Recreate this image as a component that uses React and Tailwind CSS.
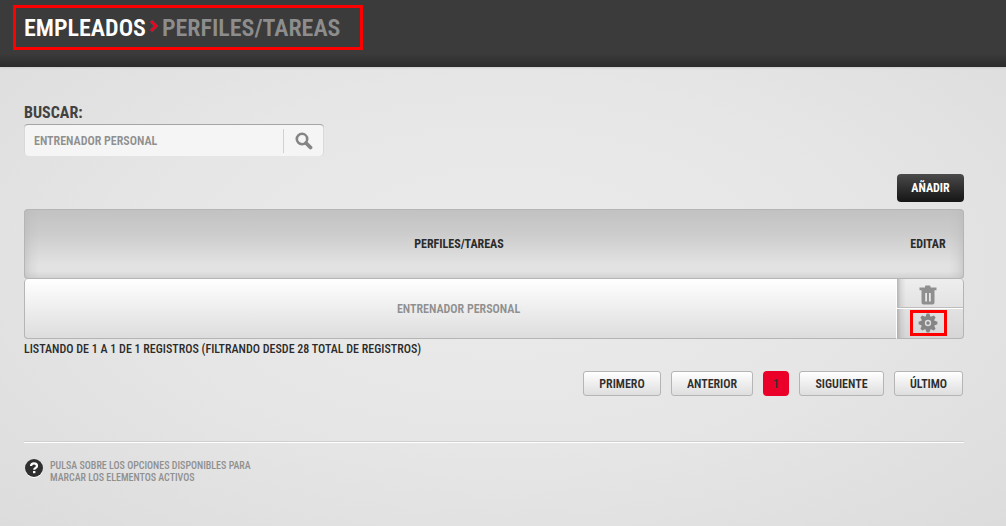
import React, { useState } from "react";

const pagerButton =
  "h-[25px] rounded-[3px] border border-[#b5b5b5] bg-linear-to-b from-white to-[#dedede] text-center font-semibold text-[#2e2e2e]";

function SearchIcon() {
  return (
    <svg width="18" height="18" viewBox="0 0 18 18" fill="none" stroke="#858585" aria-hidden="true">
      <circle cx="7" cy="7" r="5.2" strokeWidth="2.6" />
      <path d="M11 11L15.5 15.5" strokeWidth="3.8" strokeLinecap="round" />
    </svg>
  );
}

function TrashIcon() {
  return (
    <svg width="18" height="20" viewBox="0 0 18 20" fill="#8f8f8f" aria-hidden="true">
      <path d="M.5 2.500h5.500V1.500Q6 .5 7 .5h3.500q1 0 1 1v1h6v2.700H.5z" />
      <path
        fillRule="evenodd"
        d="M2.500 5h13v12.500q0 2-2 2h-9q-2 0-2-2zM6.200 8v8.500h1.800V8zM10 8v8.500h1.800V8z"
      />
    </svg>
  );
}

function GearIcon() {
  const teeth = [0, 45, 90, 135, 180, 225, 270, 315];
  return (
    <svg className="shrink-0" width="20" height="20" viewBox="0 0 20 20" fill="#858585" aria-hidden="true">
      {teeth.map((a) => (
        <path key={a} d="M7.200 4.500L8.700 .6h2.600L12.800 4.500z" transform={`rotate(${a} 10 10)`} />
      ))}
      <path
        fillRule="evenodd"
        d="M10 3.200a6.800 6.800 0 1 0 0 13.600a6.800 6.800 0 1 0 0-13.600zM10 6.800a3.200 3.200 0 1 1 0 6.400a3.200 3.200 0 1 1 0-6.400z"
      />
      <circle cx="10" cy="10" r="1.700" />
    </svg>
  );
}

function HelpIcon() {
  return (
    <svg className="shrink-0" width="20" height="20" viewBox="0 0 20 20" fill="none" aria-hidden="true">
      <circle cx="10" cy="11" r="9" fill="#fff" />
      <circle cx="10" cy="10" r="9" fill="#303030" />
      <path d="M7 8Q7 5.300 10 5.300T13 7.900Q13 9.200 11.500 9.900Q10.200 10.500 10.200 11.800" stroke="#fff" strokeWidth="2.200" />
      <rect x="9" y="13" width="2.400" height="2.200" fill="#fff" />
    </svg>
  );
}

export default function App() {
  const [query, setQuery] = useState("ENTRENADOR PERSONAL");

  return (
    <div className="min-h-screen bg-[radial-gradient(ellipse_at_center,#ebebeb_0%,#e6e6e6_50%,#dcdcdc_100%)] font-['Roboto_Condensed','Liberation_Sans_Narrow','Liberation_Sans',sans-serif] text-[12px] font-bold leading-4 text-[#8f8f8f]">
      <header className="h-[67px] bg-linear-to-b from-[#3b3b3b] from-80% to-[#2b2b2b] px-[13px] pt-[5px] shadow-[0_1px_2px_#cccccc]">
        <nav
          aria-label="Ruta"
          className="flex h-[45px] w-[350px] items-center border-3 border-[#ff0000] pl-2 text-[24px] leading-7"
        >
          <a href="#empleados" className="font-semibold text-white">EMPLEADOS</a>
          <svg className="mx-1 mb-1 shrink-0" width="8" height="14" viewBox="0 0 8 14" fill="none" aria-hidden="true">
            <path d="M1 2L6 7L1 12" stroke="#6a4a4c" strokeWidth="3.400" />
            <path d="M1 2L6 7L1 12" stroke="#f00020" strokeWidth="2.400" />
          </svg>
          <h1 className="font-semibold text-[#8d8d8d]">PERFILES/TAREAS</h1>
        </nav>
      </header>

      <main className="pr-[42px] pl-6 pt-9">
        <label htmlFor="search" className="block text-[16px] leading-5 text-[#424242]">BUSCAR:</label>
        <form
          onSubmit={(e) => e.preventDefault()}
          className="mt-px flex h-8 w-[300px] items-center rounded-[4px] border-t border-[#a5a5a5] bg-[#f5f5f5] shadow-[inset_1px_0_0_#d9d9d9,inset_-1px_0_0_#d9d9d9]"
        >
          <input
            id="search"
            type="text"
            value={query}
            onChange={(e) => setQuery(e.target.value)}
            className="min-w-0 flex-1 bg-transparent px-2.5 font-semibold outline-none"
          />
          <button type="submit" aria-label="Buscar" className="flex h-6 w-[41px] items-center justify-center border-l border-[#d2d2d2]">
            <SearchIcon />
          </button>
        </form>

        <div className="mt-[18px] flex justify-end">
          <button type="button" className="h-7 w-[67px] rounded-[4px] bg-linear-to-b from-[#4b4b4b] to-[#161616] text-white">
            AÑADIR
          </button>
        </div>

        <table className="mt-[7px] w-full table-fixed border-separate border-spacing-0 text-center">
          <colgroup>
            <col />
            <col className="w-[67px]" />
          </colgroup>
          <thead>
            <tr className="h-[70px] text-[#2b2b2b]">
              <th className="rounded-l-[4px] border border-r-0 border-[#b5b5b5] bg-[linear-gradient(to_right,#b9b9b988,#b9b9b933_6px,#b9b9b900_14px),linear-gradient(#c2c2c2,#cccccc_35%,#e2e2e2_80%,#e2e2e2_90%,#d2d2d2)] p-0 pr-1">
                PERFILES/TAREAS
              </th>
              <th className="rounded-r-[4px] border border-l-0 border-[#b5b5b5] bg-[linear-gradient(to_left,#b9b9b988,#b9b9b933_6px,#b9b9b900_14px),linear-gradient(#c2c2c2,#cccccc_35%,#e2e2e2_80%,#e2e2e2_90%,#d2d2d2)] p-0 pr-1">
                EDITAR
              </th>
            </tr>
          </thead>
          <tbody>
            <tr className="h-[60px]">
              <td className="rounded-l-[4px] border border-t-0 border-r-white border-b-[#b5b5b5] border-l-[#b5b5b5] bg-linear-to-b from-white to-[#dddddd] p-0 pr-1 font-semibold">
                ENTRENADOR PERSONAL
              </td>
              <td className="rounded-r-[4px] border border-t-0 border-l-0 border-[#b5b5b5] bg-[linear-gradient(to_right,#999999aa,#99999933_4px,#99999900_9px),linear-gradient(#eeeeee,#d6d6d6)] p-0 align-top">
                <button type="button" aria-label="Eliminar" className="flex h-[29px] w-full items-center justify-center border-b border-[#bdbdbd] pr-1 pt-1">
                  <TrashIcon />
                </button>
                <div className="flex h-[30px] items-start justify-center border-t border-white pr-1 pt-px">
                  <button type="button" aria-label="Configurar" className="flex h-[26px] w-[37px] items-center justify-center border-3 border-[#ff0000]">
                    <GearIcon />
                  </button>
                </div>
              </td>
            </tr>
          </tbody>
        </table>

        <p className="mt-[2px] font-medium text-[#2b2b2b]">
          LISTANDO DE 1 A 1 DE 1 REGISTROS (FILTRANDO DESDE 28 TOTAL DE REGISTROS)
        </p>

        <nav aria-label="Paginación" className="mt-3.5 flex justify-end gap-2.5 pr-px">
          <button type="button" className={`${pagerButton} w-[78px]`}>PRIMERO</button>
          <button type="button" className={`${pagerButton} w-[82px]`}>ANTERIOR</button>
          <button type="button" aria-current="page" className="h-[25px] w-[26px] rounded-[4px] bg-[#ea0029] font-medium text-[#3b2b2b]">1</button>
          <button type="button" className={`${pagerButton} w-[85px]`}>SIGUIENTE</button>
          <button type="button" className={`${pagerButton} w-[69px]`}>ÚLTIMO</button>
        </nav>

        <footer className="mt-[45px] flex gap-1.5 border-t border-[#cfcfcf] pt-4 text-[10px] leading-3 shadow-[inset_0_1px_0_#ffffff]">
          <HelpIcon />
          <p className="pt-0.5 font-medium">
            PULSA SOBRE LOS OPCIONES DISPONIBLES PARA
            <br />
            MARCAR LOS ELEMENTOS ACTIVOS
          </p>
        </footer>
      </main>
    </div>
  );
}
